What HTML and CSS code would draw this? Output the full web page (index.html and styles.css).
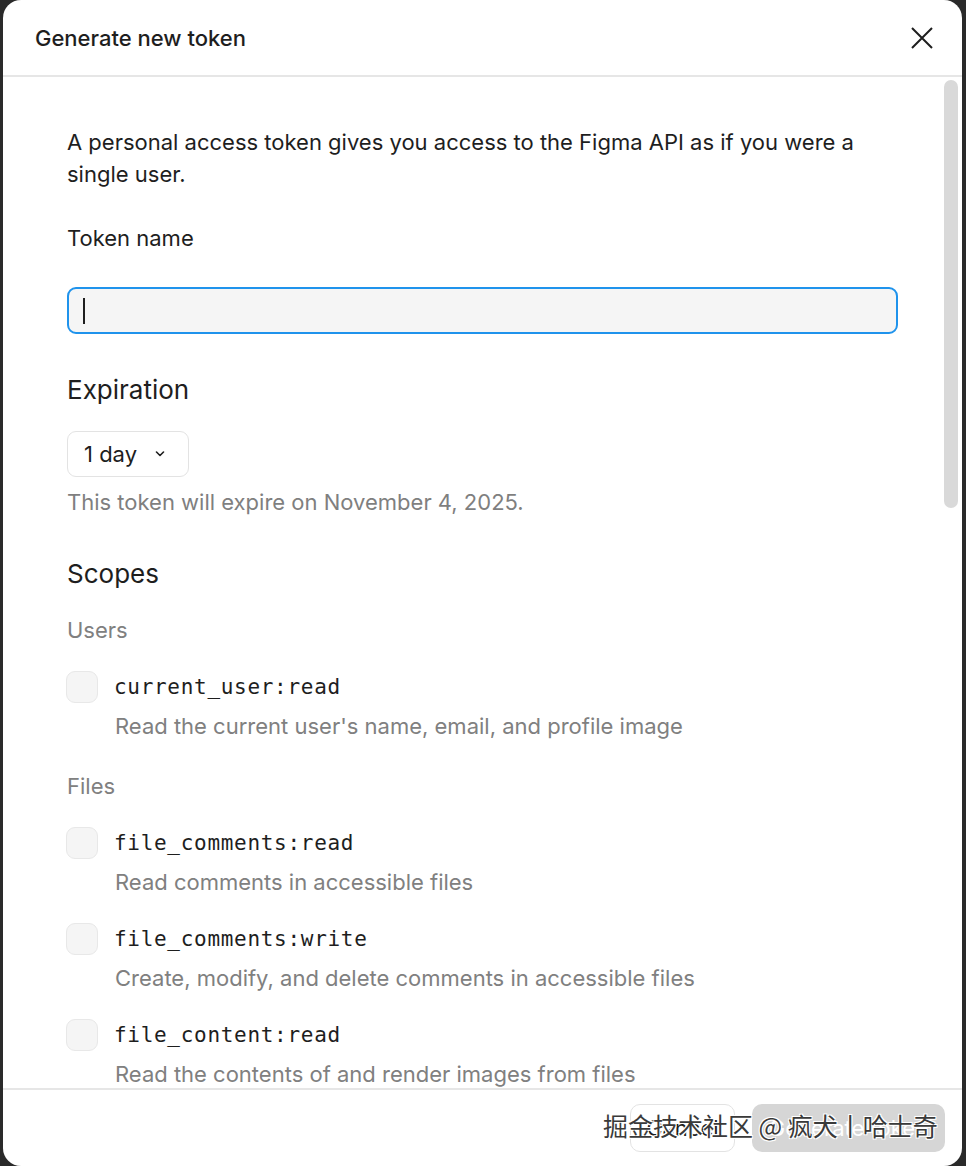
FILE: index.html
```html
<!DOCTYPE html>
<html lang="en">
<head>
<meta charset="utf-8">
<title>Generate new token</title>
<link rel="stylesheet" href="styles.css">
</head>
<body>
<div class="dialog">
  <header class="dialog-header">
    <h1 class="dialog-title">Generate new token</h1>
    <button class="close-btn" aria-label="Close">
      <svg width="24" height="24" viewBox="0 0 24 24"><path d="M2 2 L22 22 M22 2 L2 22" stroke="#1e1e1e" stroke-width="2" fill="none"/></svg>
    </button>
  </header>
  <main class="dialog-body">
    <div class="scroll-thumb"></div>
    <div class="content">
      <p class="intro">A personal access token gives you access to the Figma API as if you were a single user.</p>
      <label class="field-label">Token name</label>
      <div class="text-input"><span class="caret"></span></div>
      <h2 class="section-title expiration-title">Expiration</h2>
      <div class="select">
        <span>1 day</span>
        <svg width="10" height="6" viewBox="0 0 10 6"><path d="M1.5 1 L5 4.5 L8.5 1" stroke="#1e1e1e" stroke-width="1.6" fill="none" stroke-linecap="round" stroke-linejoin="round"/></svg>
      </div>
      <p class="hint">This token will expire on November 4, 2025.</p>
      <h2 class="section-title scopes-title">Scopes</h2>
      <div class="group-label">Users</div>
      <div class="scope">
        <div class="scope-row"><span class="checkbox"></span><code class="scope-name">current_user:read</code></div>
        <div class="scope-desc">Read the current user's name, email, and profile image</div>
      </div>
      <div class="group-label files-label">Files</div>
      <div class="scope">
        <div class="scope-row"><span class="checkbox"></span><code class="scope-name">file_comments:read</code></div>
        <div class="scope-desc">Read comments in accessible files</div>
      </div>
      <div class="scope">
        <div class="scope-row"><span class="checkbox"></span><code class="scope-name">file_comments:write</code></div>
        <div class="scope-desc">Create, modify, and delete comments in accessible files</div>
      </div>
      <div class="scope">
        <div class="scope-row"><span class="checkbox"></span><code class="scope-name">file_content:read</code></div>
        <div class="scope-desc">Read the contents of and render images from files</div>
      </div>
    </div>
  </main>
  <footer class="dialog-footer">
    <button class="btn btn-secondary">Cancel</button>
    <button class="btn btn-primary" disabled>Generate token</button>
    <span class="watermark">掘金技术社区 @ 疯犬丨哈士奇</span>
  </footer>
</div>
</body>
</html>
```

FILE: styles.css
```css
* { box-sizing: border-box; }
html, body { margin: 0; padding: 0; }
body {
  background: #2a2a2a;
  width: 966px;
  height: 1166px;
  overflow: hidden;
  font-family: Inter, "Noto Sans", sans-serif;
  color: #1e1e1e;
}
.dialog {
  margin-left: 3px;
  width: 959px;
  height: 1166px;
  background: #fff;
  border-radius: 18px;
  display: flex;
  flex-direction: column;
  overflow: hidden;
}
.dialog-header {
  height: 77px;
  flex: none;
  display: flex;
  align-items: center;
  justify-content: space-between;
  padding: 0 28px 0 32px;
  border-bottom: 2px solid #e6e6e6;
}
.dialog-title {
  margin: 0;
  font-size: 22px;
  font-weight: 500;
}
.close-btn {
  border: none;
  background: none;
  padding: 0;
  width: 24px;
  height: 24px;
  display: flex;
}
.dialog-body {
  flex: 1;
  position: relative;
  overflow: hidden;
}
.scroll-thumb {
  position: absolute;
  right: 4px;
  top: 3px;
  width: 14px;
  height: 428px;
  background: #d9d9d9;
  border-radius: 7px;
}
.content {
  padding: 49px 0 0 64px;
  width: 895px;
  display: flex;
  flex-direction: column;
  align-items: flex-start;
}
.intro {
  margin: 0;
  font-size: 22px;
  line-height: 32px;
  width: 830px;
}
.field-label {
  margin-top: 32px;
  font-size: 22px;
  line-height: 32px;
}
.text-input {
  margin-top: 33px;
  width: 831px;
  height: 47px;
  border: 2px solid #1f93ec;
  border-radius: 9px;
  background: #f5f5f5;
  display: flex;
  align-items: center;
  padding-left: 14px;
}
.caret {
  width: 2px;
  height: 26px;
  background: #1e1e1e;
}
.section-title {
  margin: 0;
  font-size: 26px;
  font-weight: 400;
  line-height: 32px;
}
.expiration-title { margin-top: 40px; }
.select {
  margin-top: 25px;
  height: 46px;
  width: 122px;
  border: 1.5px solid #e3e3e3;
  border-radius: 9px;
  display: flex;
  align-items: center;
  gap: 18px;
  padding-left: 16px;
  font-size: 22px;
}
.hint {
  margin: 9px 0 0;
  font-size: 22px;
  line-height: 32px;
  color: #7f7f7f;
}
.scopes-title { margin-top: 40px; }
.group-label {
  margin-top: 24px;
  font-size: 22px;
  line-height: 32px;
  color: #808080;
}
.files-label { margin-top: 28px; }
.scope {
  margin-top: 25px;
  display: flex;
  flex-direction: column;
}
.scope + .scope { margin-top: 25px; }
.scope-row {
  display: flex;
  align-items: center;
  gap: 16px;
  height: 31px;
}
.checkbox {
  width: 32px;
  height: 32px;
  border-radius: 9px;
  background: #f5f5f5;
  border: 1.5px solid #e8e8e8;
  margin-left: -1px;
}
.scope-name {
  font-family: "DejaVu Sans Mono", "Liberation Mono", monospace;
  font-size: 21px;
  letter-spacing: 0.7px;
  color: #1e1e1e;
}
.scope-desc {
  margin-top: 8px;
  padding-left: 48px;
  font-size: 22px;
  line-height: 32px;
  color: #808080;
}
.dialog-footer {
  height: 78px;
  flex: none;
  border-top: 2px solid #e6e6e6;
  display: flex;
  align-items: center;
  justify-content: flex-end;
  gap: 17px;
  padding-right: 17px;
  position: relative;
}
.btn {
  height: 48px;
  border-radius: 10px;
  font-family: Inter, "Noto Sans", sans-serif;
  font-size: 22px;
  padding: 0 14px;
  white-space: nowrap;
}
.btn-secondary {
  background: #fff;
  border: 1.5px solid #e3e3e3;
  color: #1e1e1e;
  width: 105px;
}
.btn-primary {
  background: #d6d6d6;
  border: none;
  color: #fff;
  width: 193px;
}
.watermark {
  position: absolute;
  left: 600px;
  top: 17px;
  font-family: "Noto Sans CJK SC", sans-serif;
  font-size: 25px;
  color: #3a3a3a;
  text-shadow: 1px 1px 0 #fff, -1px -1px 0 #fff, 1px -1px 0 #fff, -1px 1px 0 #fff;
  white-space: nowrap;
}
```
